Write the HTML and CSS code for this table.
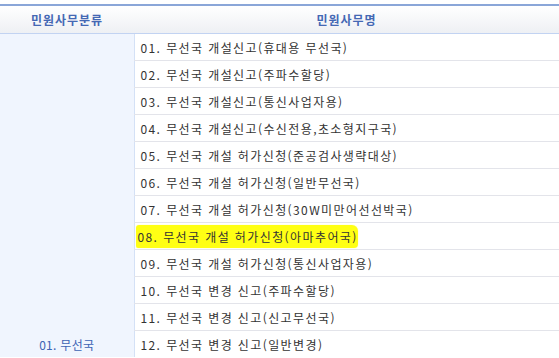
FILE: index.html
```html
<!DOCTYPE html>
<html lang="ko">
<head>
<meta charset="utf-8">
<link rel="stylesheet" href="styles.css">
</head>
<body>
<div class="wrap">
<table class="tbl">
  <thead>
    <tr><th class="c1">민원사무분류</th><th class="c2">민원사무명</th></tr>
  </thead>
  <tbody>
    <tr><td class="cat" rowspan="12"><span>01. 무선국</span></td><td>01. 무선국 개설신고(휴대용 무선국)</td></tr>
    <tr><td>02. 무선국 개설신고(주파수할당)</td></tr>
    <tr><td>03. 무선국 개설신고(통신사업자용)</td></tr>
    <tr><td>04. 무선국 개설신고(수신전용,초소형지구국)</td></tr>
    <tr><td>05. 무선국 개설 허가신청(준공검사생략대상)</td></tr>
    <tr><td>06. 무선국 개설 허가신청(일반무선국)</td></tr>
    <tr><td>07. 무선국 개설 허가신청(30W미만어선선박국)</td></tr>
    <tr><td><span class="hl">08. 무선국 개설 허가신청(아마추어국)</span></td></tr>
    <tr><td>09. 무선국 개설 허가신청(통신사업자용)</td></tr>
    <tr><td>10. 무선국 변경 신고(주파수할당)</td></tr>
    <tr><td>11. 무선국 변경 신고(신고무선국)</td></tr>
    <tr><td class="last">12. 무선국 변경 신고(일반변경)</td></tr>
  </tbody>
</table>
</div>
</body>
</html>
```
FILE: styles.css
```css
html, body { margin: 0; padding: 0; background: #fff; }
body { font-family: "Noto Sans CJK KR", "Noto Sans", sans-serif; font-size: 12px; color: #333; }
.wrap { padding-top: 4px; width: 559px; overflow: hidden; height: 354px; }
.tbl { border-collapse: collapse; width: 559px; table-layout: fixed; border-top: 2px solid #8aa6d8; }
.tbl th { height: 27px; padding: 0; background: linear-gradient(#ffffff, #eef0f4); color: #4468b4; font-weight: bold; font-size: 12px; letter-spacing: 1px; border-bottom: 1px solid #c2d3f2; text-align: center; }
.c1 { width: 134px; }
.tbl td { height: 26px; padding: 0 0 0 6px; border-bottom: 1px solid #e3e4ea; border-left: 1px solid #d4e1f6; white-space: nowrap; letter-spacing: 1.4px; }
.tbl td.cat { background: #f0f5fe; border-left: none; border-bottom: none; color: #3d63b4; text-align: center; vertical-align: bottom; padding: 0 0 4px 0; letter-spacing: 0.3px; }
.tbl td.last { border-bottom: none; }
.hl { background: #ffff14; padding: 3px 0 3px 2px; margin-left: -5px; border-radius: 3px 6px 4px 2px; box-shadow: 0 0 1px #ffff60; }
```
